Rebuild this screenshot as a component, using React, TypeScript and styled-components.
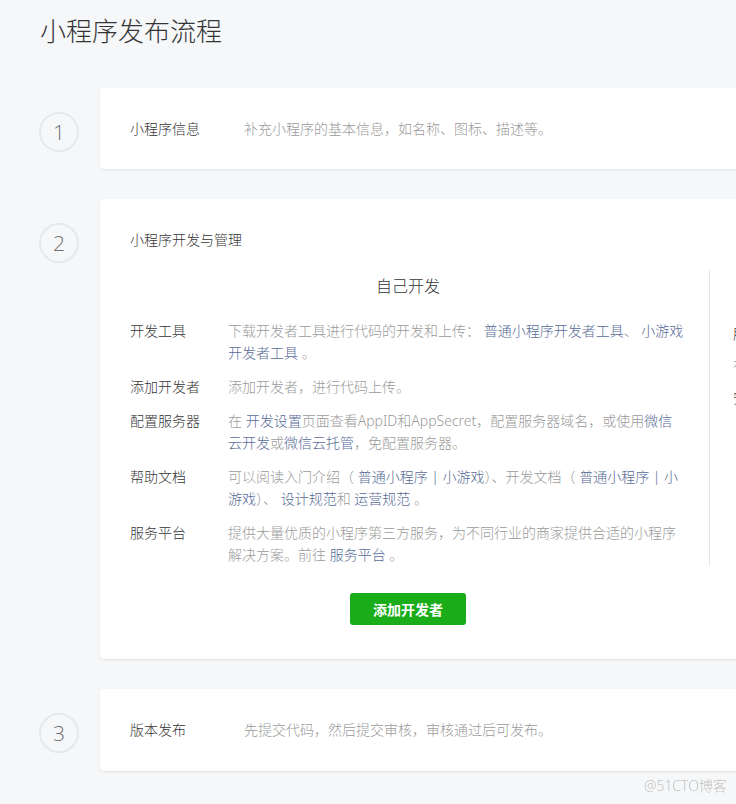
import styled, { createGlobalStyle } from 'styled-components';
import type { ReactNode } from 'react';

const GlobalStyle = createGlobalStyle`
  html, body {
    margin: 0;
    padding: 0;
    background: #f6f7f9;
    overflow: hidden;
  }
  body {
    font-family: "Noto Sans", "Noto Sans CJK SC", sans-serif;
    font-weight: 300;
    color: #353535;
    -webkit-font-smoothing: antialiased;
  }
`;

const Page = styled.div`
  width: 1040px;
  padding: 13px 0 40px 40px;
`;

const Title = styled.h1`
  margin: 0 0 39px;
  font-size: 26px;
  line-height: 36px;
  font-weight: 300;
  color: #353535;
`;

const StepList = styled.div`
  display: flex;
  flex-direction: column;
  gap: 30px;
`;

const Step = styled.div`
  display: flex;
  align-items: flex-start;
`;

const Indicator = styled.div`
  width: 60px;
  flex-shrink: 0;
  padding-top: 24px;
  margin-left: -1px;
`;

const Circle = styled.div`
  box-sizing: border-box;
  width: 40px;
  height: 40px;
  border: 2px solid #e7e8ea;
  border-radius: 50%;
  display: flex;
  align-items: center;
  justify-content: center;
  font-family: "Open Sans", "Noto Sans", sans-serif;
  font-size: 21px;
  font-weight: 300;
  color: #6f6f6f;
`;

const Card = styled.div<{ $padBottom: number }>`
  margin-left: 1px;
  width: 900px;
  background: #fff;
  border-radius: 4px;
  box-shadow: 0 1px 2px rgba(0, 0, 0, 0.09);
  padding: 30px 30px ${({ $padBottom }) => $padBottom}px;
  font-size: 14px;
  line-height: 22px;
`;

const InfoRow = styled.div`
  display: flex;
`;

const InfoLabel = styled.div`
  width: 114px;
  flex-shrink: 0;
  color: #353535;
`;

const Muted = styled.div`
  color: #9a9a9a;
`;

const CardHeading = styled.div`
  color: #353535;
`;

const Columns = styled.div`
  display: flex;
  margin-top: 19px;
`;

const SelfColumn = styled.div`
  width: 556px;
  padding-right: 23px;
  border-right: 1px solid #e7e7e7;
`;

const AgencyColumn = styled.div`
  width: 280px;
  padding-left: 23px;
`;

const ColumnTitle = styled.div`
  font-size: 16px;
  line-height: 32px;
  text-align: center;
  color: #353535;
  margin-bottom: 18px;
  white-space: nowrap;
`;

const DevList = styled.div`
  display: flex;
  flex-direction: column;
  gap: 12px;
`;

const DevItem = styled.div`
  display: flex;
`;

const DevLabel = styled.div`
  width: 98px;
  flex-shrink: 0;
  color: #353535;
`;

const DevDesc = styled.div`
  width: 462px;
  color: #9a9a9a;
`;

const Link = styled.span`
  color: #576b95;
`;

const AgencyList = styled.div`
  display: flex;
  flex-direction: column;
  gap: 10px;
  padding-top: 3px;
`;

const AgencyLine = styled.div<{ $muted: boolean }>`
  color: ${({ $muted }) => ($muted ? '#9a9a9a' : '#353535')};
  line-height: 22px;
  white-space: nowrap;
`;

const ActionBar = styled.div`
  width: 556px;
  display: flex;
  justify-content: center;
  margin-top: 27px;
`;

const PrimaryButton = styled.button`
  width: 116px;
  height: 32px;
  border: none;
  border-radius: 3px;
  background: #1aad19;
  color: #fff;
  font-family: inherit;
  font-size: 14px;
  font-weight: 700;
  cursor: pointer;
`;

const Watermark = styled.div`
  position: fixed;
  right: 9px;
  bottom: 8px;
  font-size: 14px;
  line-height: 20px;
  color: #c2c2c2;
`;

interface DevRow {
  label: string;
  desc: ReactNode;
}

const devRows: DevRow[] = [
  {
    label: '开发工具',
    desc: (
      <>
        下载开发者工具进行代码的开发和上传： <Link>普通小程序开发者工具</Link>、 <Link>小游戏开发者工具</Link> 。
      </>
    ),
  },
  { label: '添加开发者', desc: '添加开发者，进行代码上传。' },
  {
    label: '配置服务器',
    desc: (
      <>
        在 <Link>开发设置</Link>页面查看AppID和AppSecret，配置服务器域名，或使用<Link>微信云开发</Link>或<Link>微信云托管</Link>，免配置服务器。
      </>
    ),
  },
  {
    label: '帮助文档',
    desc: (
      <>
        可以阅读入门介绍（ <Link>普通小程序 | 小游戏</Link>）、开发文档（ <Link>普通小程序 | 小游戏</Link>）、 <Link>设计规范</Link>和 <Link>运营规范</Link> 。
      </>
    ),
  },
  {
    label: '服务平台',
    desc: (
      <>
        提供大量优质的小程序第三方服务，为不同行业的商家提供合适的小程序解决方案。前往 <Link>服务平台</Link> 。
      </>
    ),
  },
];

const agencyRows = [
  { text: '服务商开发', muted: false },
  { text: '有丰富经验的第三方服务商为你开发小程序', muted: true },
  { text: '安全可靠，快速上线', muted: false },
];

export default function App() {
  return (
    <>
      <GlobalStyle />
      <Page>
        <Title>小程序发布流程</Title>
        <StepList>
          <Step>
            <Indicator>
              <Circle>1</Circle>
            </Indicator>
            <Card $padBottom={29}>
              <InfoRow>
                <InfoLabel>小程序信息</InfoLabel>
                <Muted>补充小程序的基本信息，如名称、图标、描述等。</Muted>
              </InfoRow>
            </Card>
          </Step>

          <Step>
            <Indicator>
              <Circle>2</Circle>
            </Indicator>
            <Card $padBottom={34}>
              <CardHeading>小程序开发与管理</CardHeading>
              <Columns>
                <SelfColumn>
                  <ColumnTitle>自己开发</ColumnTitle>
                  <DevList>
                    {devRows.map((row) => (
                      <DevItem key={row.label}>
                        <DevLabel>{row.label}</DevLabel>
                        <DevDesc>{row.desc}</DevDesc>
                      </DevItem>
                    ))}
                  </DevList>
                </SelfColumn>
                <AgencyColumn>
                  <ColumnTitle>委托服务商开发</ColumnTitle>
                  <AgencyList>
                    {agencyRows.map((row) => (
                      <AgencyLine key={row.text} $muted={row.muted}>
                        {row.text}
                      </AgencyLine>
                    ))}
                  </AgencyList>
                </AgencyColumn>
              </Columns>
              <ActionBar>
                <PrimaryButton type="button">添加开发者</PrimaryButton>
              </ActionBar>
            </Card>
          </Step>

          <Step>
            <Indicator>
              <Circle>3</Circle>
            </Indicator>
            <Card $padBottom={30}>
              <InfoRow>
                <InfoLabel>版本发布</InfoLabel>
                <Muted>先提交代码，然后提交审核，审核通过后可发布。</Muted>
              </InfoRow>
            </Card>
          </Step>
        </StepList>
      </Page>
      <Watermark>@51CTO博客</Watermark>
    </>
  );
}
